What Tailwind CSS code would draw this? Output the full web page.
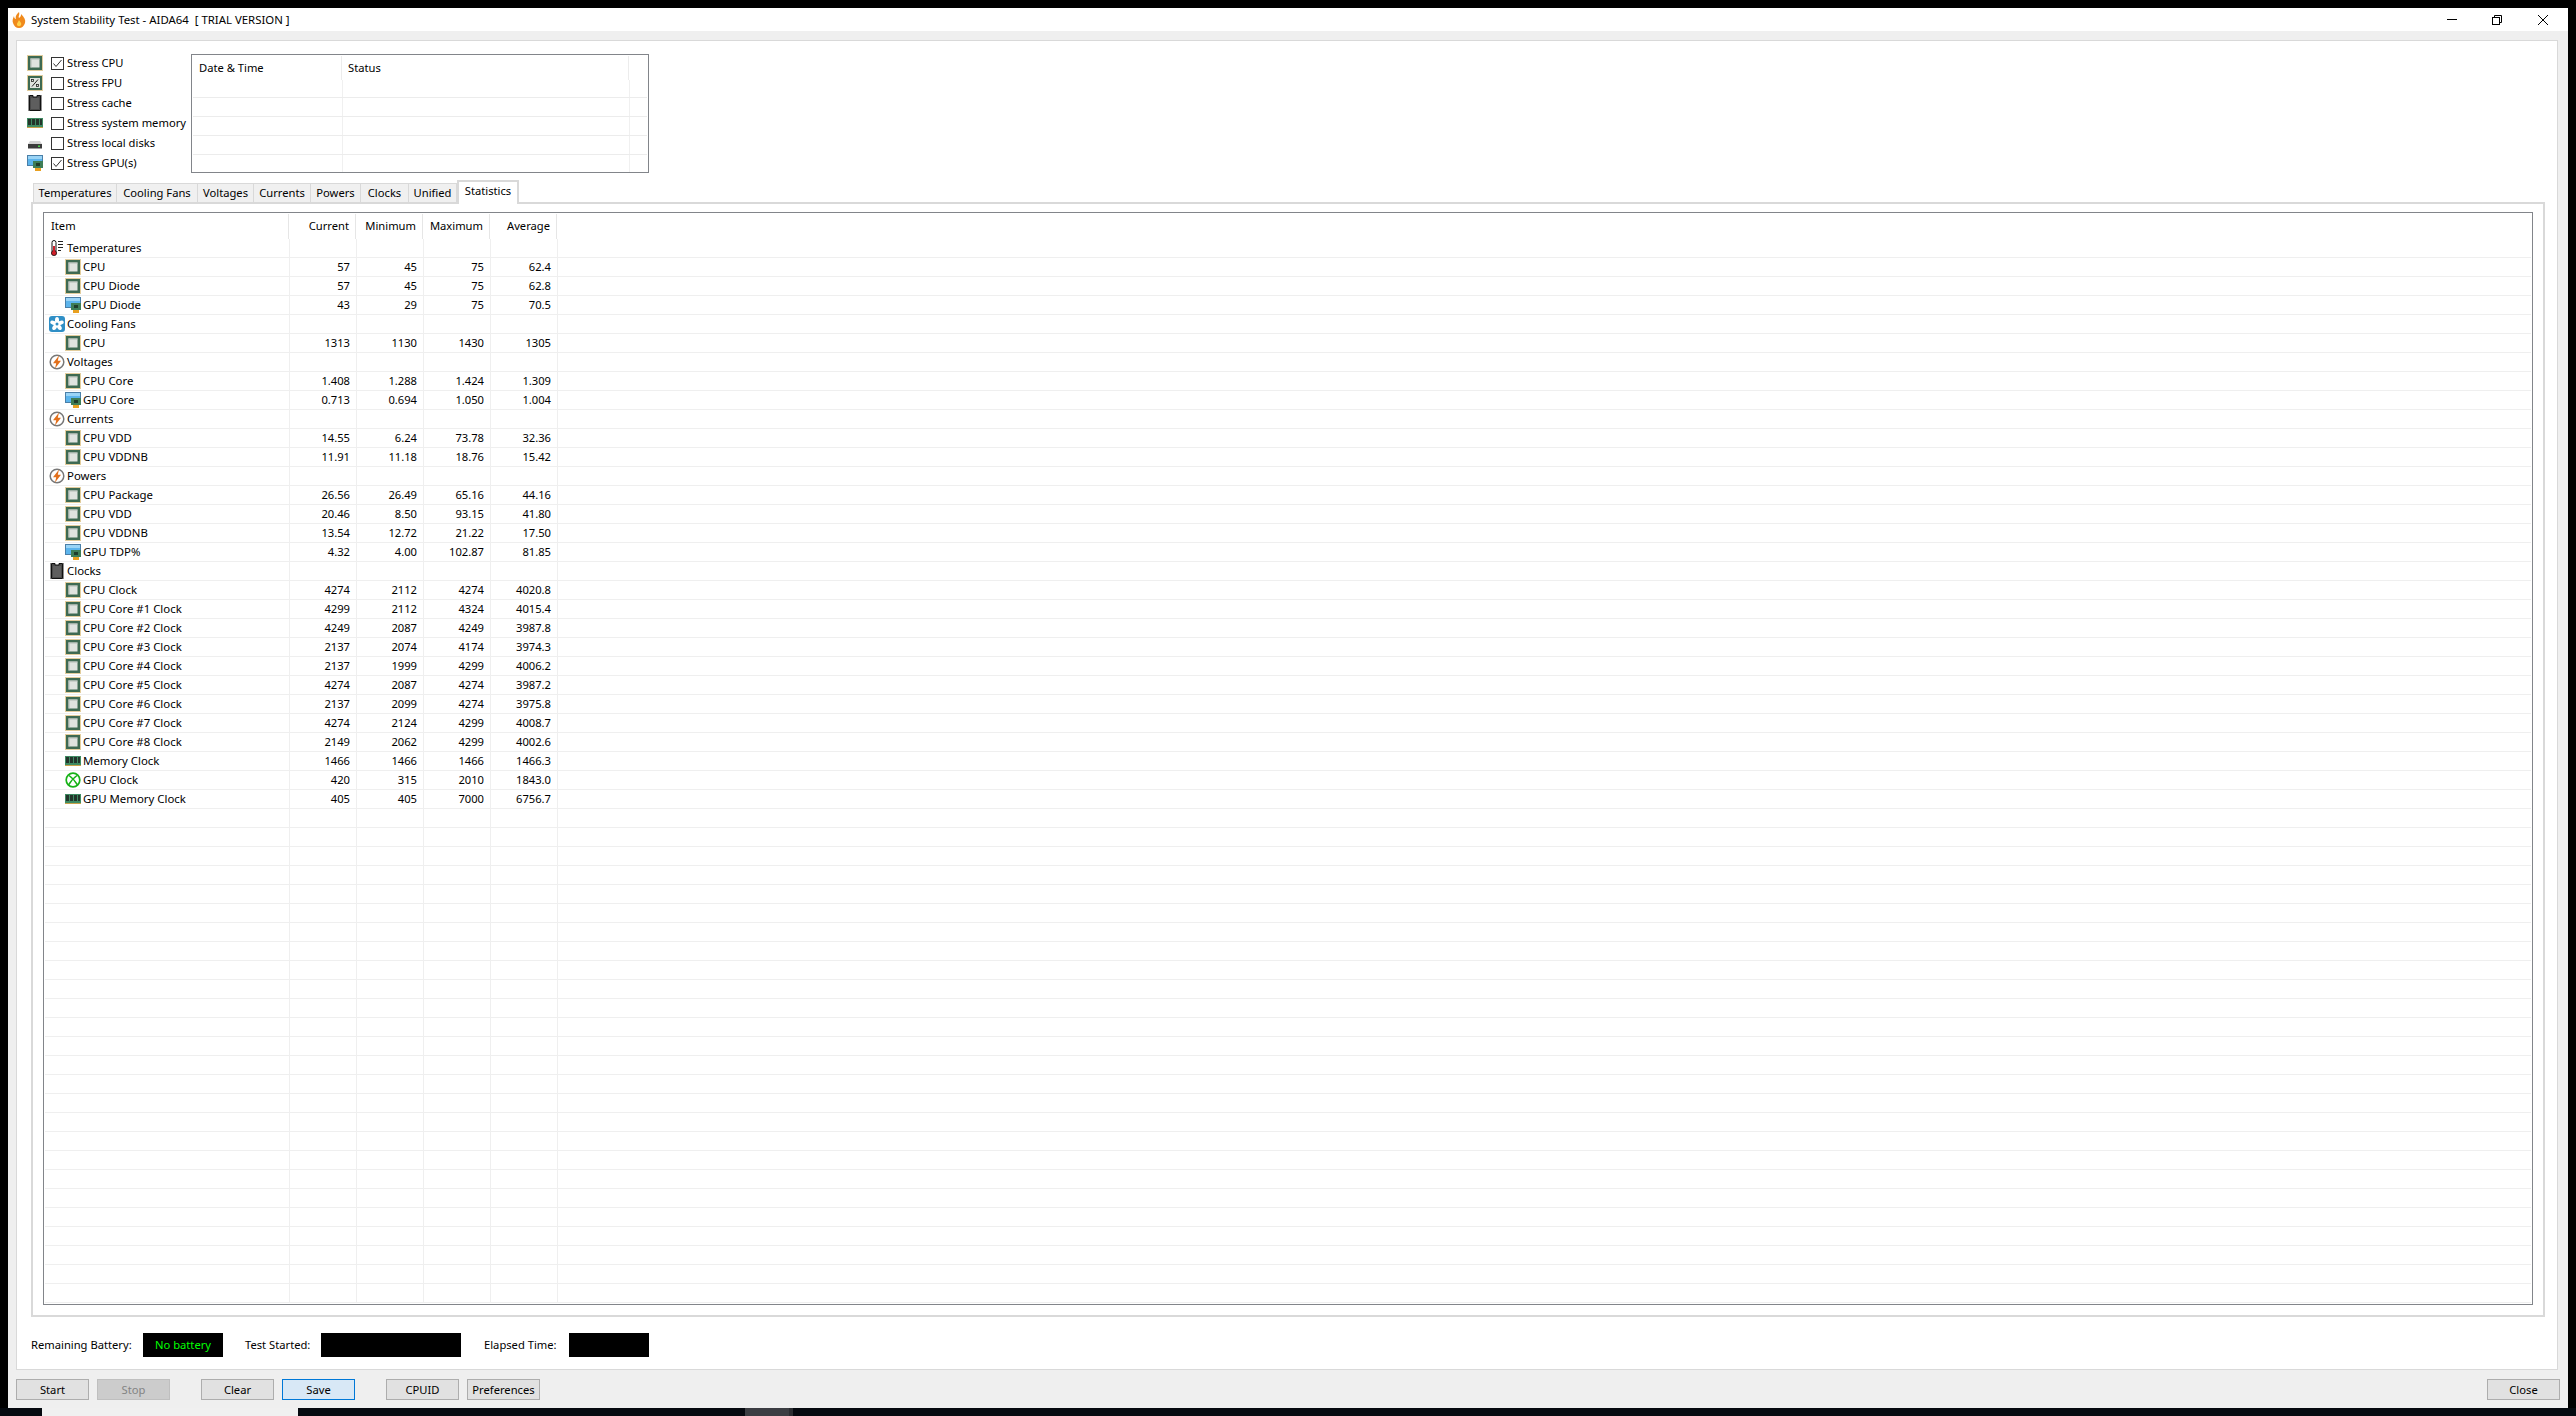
<!DOCTYPE html>
<html lang="en">
<head>
<meta charset="UTF-8">
<title>System Stability Test - AIDA64</title>
<script src="https://cdn.jsdelivr.net/npm/@tailwindcss/browser@4"></script>
</head>
<body class="bg-black w-[2576px] h-[1416px] overflow-hidden font-['Noto_Sans',sans-serif] text-[11.2px] leading-[16px] text-black">

<!-- shared icons -->
<svg class="hidden">
  <symbol id="cpu" viewBox="0 0 16 16">
    <rect x="0.5" y="0.5" width="15" height="15" fill="none" stroke="#c49a3a" stroke-dasharray="1 1"/>
    <rect x="1" y="1" width="14" height="14" fill="#3e6a52"/>
    <rect x="3.500" y="3.500" width="9" height="9" fill="#dfe3df"/>
    <rect x="3.500" y="3.500" width="9" height="1" fill="#b4bcb6"/>
    <rect x="3.500" y="3.500" width="1" height="9" fill="#b4bcb6"/>
  </symbol>
  <symbol id="fpu" viewBox="0 0 16 16">
    <rect x="0.5" y="0.5" width="15" height="15" fill="none" stroke="#c49a3a" stroke-dasharray="1 1"/>
    <rect x="1" y="1" width="14" height="14" fill="#3e6a52"/>
    <rect x="3" y="3" width="10" height="10" fill="#dfe3df"/>
    <path d="M5 11.500 11 4.500" stroke="#222" fill="none"/>
    <rect x="4.500" y="4.500" width="2" height="2" fill="none" stroke="#222" stroke-width="0.8"/>
    <rect x="9.500" y="9.500" width="2" height="2" fill="none" stroke="#222" stroke-width="0.8"/>
  </symbol>
  <symbol id="chip" viewBox="0 0 16 16">
    <path d="M1 1h1M1 3h1M1 5h1M1 7h1M1 9h1M1 11h1M1 13h1M1 15h1M14 1h1M14 3h1M14 5h1M14 7h1M14 9h1M14 11h1M14 13h1M14 15h1" stroke="#222"/>
    <path d="M2.500 0.500h3.500v1.500h4v-1.500h3.500v15h-11z" fill="#4a4a4a" stroke="#111"/>
    <rect x="4" y="3" width="8" height="11" fill="#5e5e5e"/>
  </symbol>
  <symbol id="mem" viewBox="0 0 16 16">
    <rect x="0" y="3" width="16" height="9" fill="#3f8a62"/>
    <rect x="0" y="12" width="16" height="1" fill="#c9a24a"/>
    <rect x="1" y="4" width="3" height="6" fill="#23352b"/>
    <rect x="5" y="4" width="3" height="6" fill="#23352b"/>
    <rect x="9" y="4" width="3" height="6" fill="#23352b"/>
    <rect x="13" y="4" width="2" height="6" fill="#23352b"/>
  </symbol>
  <symbol id="disk" viewBox="0 0 16 16">
    <path d="M3 6h10l2 3v4H1V9z" fill="#d4d4d4"/>
    <rect x="1" y="9" width="14" height="4.500" fill="#3c3c3c"/>
    <rect x="11" y="10.500" width="2" height="1.500" fill="#4fd34f"/>
  </symbol>
  <symbol id="gpu" viewBox="0 0 16 16">
    <rect x="0.500" y="0.500" width="15" height="10" fill="#5cb4ec" stroke="#4a7fa8"/>
    <rect x="1" y="1" width="14" height="3" fill="#9ad4f6"/>
    <rect x="6" y="6" width="10" height="7" fill="#3e7d56"/>
    <rect x="9" y="8" width="4" height="3" fill="#1f3d2b"/>
    <rect x="8" y="13" width="6" height="3" fill="#e8a020"/>
  </symbol>
  <symbol id="therm" viewBox="0 0 16 16">
    <rect x="3" y="0.500" width="4" height="12" rx="2" fill="#fff" stroke="#111"/>
    <circle cx="5" cy="13" r="2.600" fill="#d01f2a" stroke="#111" stroke-width="0.8"/>
    <rect x="4" y="6" width="2" height="6" fill="#d01f2a"/>
    <path d="M9 1.500h5M9 4.500h5M9 7.500h5M9 10.500h3" stroke="#222"/>
  </symbol>
  <symbol id="fan" viewBox="0 0 16 16">
    <rect width="16" height="16" rx="3" fill="#2f8fc6"/>
    <g fill="#fff">
      <ellipse cx="8" cy="4.300" rx="2" ry="3.300"/>
      <ellipse cx="8" cy="4.300" rx="2" ry="3.300" transform="rotate(72 8 8)"/>
      <ellipse cx="8" cy="4.300" rx="2" ry="3.300" transform="rotate(144 8 8)"/>
      <ellipse cx="8" cy="4.300" rx="2" ry="3.300" transform="rotate(216 8 8)"/>
      <ellipse cx="8" cy="4.300" rx="2" ry="3.300" transform="rotate(288 8 8)"/>
    </g>
    <circle cx="8" cy="8" r="1.500" fill="#2f8fc6"/>
  </symbol>
  <symbol id="bolt" viewBox="0 0 16 16">
    <circle cx="8" cy="8" r="6.800" fill="#fff" stroke="#777" stroke-width="1.500"/>
    <path d="M10 1.500 4 9.200h3.200L6 14.500 12 6.800H8.800z" fill="#e2701c"/>
  </symbol>
  <symbol id="xbox" viewBox="0 0 16 16">
    <circle cx="8" cy="8" r="6.800" fill="#fff" stroke="#17b217" stroke-width="1.700"/>
    <path d="M4 3.500C7 5.500 10 9 12.500 13M12 3.500C9 5.500 6 9 3.500 13" stroke="#17b217" stroke-width="1.500" fill="none"/>
  </symbol>
</svg>

<div class="h-2"></div>

<div class="ml-2 w-[2560px] h-[1400px] bg-[#efefef] flex flex-col">

  <!-- Title bar -->
  <div class="h-[23px] bg-white flex items-center">
    <svg class="ml-1 w-3.5 h-4" viewBox="0 0 14 16">
      <path d="M7 0C8 3 6 4 7 6 9 5 9 3 9 2c3 3 5 6 4 9-1 3-3 5-6 5s-5-2-6-5C0 9 1 6 2 4c0 2 1 3 2 3C3 4 5 2 7 0Z" fill="#f08a1c"/>
      <path d="M7 8c1 2 3 3 2 5-.5 1.500-3.500 1.500-4 0-.5-2 1.500-3 2-5Z" fill="#ffd24a"/>
    </svg>
    <span class="ml-[5px] text-[11.4px]">System Stability Test - AIDA64&nbsp; [ TRIAL VERSION ]</span>
    <div class="ml-auto flex items-center h-full relative">
      <div class="w-[10px] h-px bg-black mr-[35px]"></div>
      <svg class="w-[10px] h-[10px] mr-9" viewBox="0 0 10 10" fill="none" stroke="#000"><path d="M2.500 2.500V.5h7v7h-2"/><rect x=".5" y="2.500" width="7" height="7"/></svg>
      <svg class="w-[10px] h-[10px] mr-5" viewBox="0 0 10 10" fill="none" stroke="#000"><path d="M0 0 10 10M10 0 0 10"/></svg>
    </div>
  </div>

  <!-- Main panel -->
  <div class="mt-[9px] ml-2 w-[2542px] h-[1330px] bg-white border border-[#d9d9d9] shrink-0">

    <div class="flex pl-[10px] pt-3">
      <div class="w-[164px]">
        <label class="h-5 flex items-center"><svg class="w-4 h-4 shrink-0"><use href="#cpu"/></svg><span class="ml-2 w-[13px] h-[13px] shrink-0 border border-[#333] flex items-center justify-center"><svg class="w-[11px] h-[11px]" viewBox="0 0 11 11" fill="none" stroke="#333"><path d="M1.500 5.500 4 8.500 9.500 2"/></svg></span><span class="ml-[3px] whitespace-nowrap">Stress CPU</span></label>
        <label class="h-5 flex items-center"><svg class="w-4 h-4 shrink-0"><use href="#fpu"/></svg><span class="ml-2 w-[13px] h-[13px] shrink-0 border border-[#333]"></span><span class="ml-[3px] whitespace-nowrap">Stress FPU</span></label>
        <label class="h-5 flex items-center"><svg class="w-4 h-4 shrink-0"><use href="#chip"/></svg><span class="ml-2 w-[13px] h-[13px] shrink-0 border border-[#333]"></span><span class="ml-[3px] whitespace-nowrap">Stress cache</span></label>
        <label class="h-5 flex items-center"><svg class="w-4 h-4 shrink-0"><use href="#mem"/></svg><span class="ml-2 w-[13px] h-[13px] shrink-0 border border-[#333]"></span><span class="ml-[3px] whitespace-nowrap">Stress system memory</span></label>
        <label class="h-5 flex items-center"><svg class="w-4 h-4 shrink-0"><use href="#disk"/></svg><span class="ml-2 w-[13px] h-[13px] shrink-0 border border-[#333]"></span><span class="ml-[3px] whitespace-nowrap">Stress local disks</span></label>
        <label class="h-5 flex items-center"><svg class="w-4 h-4 shrink-0"><use href="#gpu"/></svg><span class="ml-2 w-[13px] h-[13px] shrink-0 border border-[#333] flex items-center justify-center"><svg class="w-[11px] h-[11px]" viewBox="0 0 11 11" fill="none" stroke="#333"><path d="M1.500 5.500 4 8.500 9.500 2"/></svg></span><span class="ml-[3px] whitespace-nowrap">Stress GPU(s)</span></label>
      </div>

      <!-- Log table -->
      <div class="mt-px w-[458px] h-[119px] border border-[#82858a] p-px overflow-hidden">
        <div class="h-[24px] flex items-center">
          <div class="w-[149px] h-full pl-[6px] flex items-center border-r border-[#ececec]">Date &amp; Time</div>
          <div class="w-[287px] h-full pl-[6px] flex items-center border-r border-[#ececec]">Status</div>
        </div>
        <div class="h-[18px] flex border-b border-[#ececec]"><div class="w-[150px] border-r border-[#f0f0f0]"></div><div class="w-[287px] border-r border-[#f0f0f0]"></div></div>
        <div class="h-[19px] flex border-b border-[#ececec]"><div class="w-[150px] border-r border-[#f0f0f0]"></div><div class="w-[287px] border-r border-[#f0f0f0]"></div></div>
        <div class="h-[19px] flex border-b border-[#ececec]"><div class="w-[150px] border-r border-[#f0f0f0]"></div><div class="w-[287px] border-r border-[#f0f0f0]"></div></div>
        <div class="h-[19px] flex border-b border-[#ececec]"><div class="w-[150px] border-r border-[#f0f0f0]"></div><div class="w-[287px] border-r border-[#f0f0f0]"></div></div>
        <div class="h-[19px] flex"><div class="w-[150px] border-r border-[#f0f0f0]"></div><div class="w-[287px] border-r border-[#f0f0f0]"></div></div>
      </div>
    </div>

    <!-- Tabs -->
    <div class="mt-[7px] ml-4 h-[22px] flex items-end">
      <div class="w-[84px] h-[19px] flex items-center justify-center bg-[#f0f0f0] border border-b-0 border-[#d9d9d9]">Temperatures</div>
      <div class="w-[81px] h-[19px] flex items-center justify-center bg-[#f0f0f0] border border-b-0 border-l-0 border-[#d9d9d9]">Cooling Fans</div>
      <div class="w-[56px] h-[19px] flex items-center justify-center bg-[#f0f0f0] border border-b-0 border-l-0 border-[#d9d9d9]">Voltages</div>
      <div class="w-[57px] h-[19px] flex items-center justify-center bg-[#f0f0f0] border border-b-0 border-l-0 border-[#d9d9d9]">Currents</div>
      <div class="w-[50px] h-[19px] flex items-center justify-center bg-[#f0f0f0] border border-b-0 border-l-0 border-[#d9d9d9]">Powers</div>
      <div class="w-[48px] h-[19px] flex items-center justify-center bg-[#f0f0f0] border border-b-0 border-l-0 border-[#d9d9d9]">Clocks</div>
      <div class="w-[48px] h-[19px] flex items-center justify-center bg-[#f0f0f0] border border-b-0 border-l-0 border-[#d9d9d9]">Unified</div>
      <div class="w-[62px] h-[24px] -mb-[2px] relative z-10 pb-1 flex items-center justify-center bg-white border-2 border-b-0 border-[#d9d9d9]">Statistics</div>
    </div>

    <!-- Tab page -->
    <div class="ml-[14px] w-[2514px] h-[1115px] border-2 border-[#d9d9d9] pl-[10px] pt-2">
      <div class="w-[2490px] h-[1093px] border border-[#82858a] p-px overflow-hidden">
        <div class="h-[25px] flex">
          <div class="w-[244px] pl-[6px] pb-[2px] flex items-center border-r border-[#e6e6e6]">Item</div>
          <div class="w-[67px] pr-[6px] pb-[2px] flex items-center justify-end border-r border-[#e6e6e6]">Current</div>
          <div class="w-[67px] pr-[6px] pb-[2px] flex items-center justify-end border-r border-[#e6e6e6]">Minimum</div>
          <div class="w-[67px] pr-[6px] pb-[2px] flex items-center justify-end border-r border-[#e6e6e6]">Maximum</div>
          <div class="w-[67px] pr-[6px] pb-[2px] flex items-center justify-end border-r border-[#e6e6e6]">Average</div>
        </div>
        <div id="rows"></div>
      </div>
    </div>

    <!-- Status -->
    <div class="mt-4 pl-[14px] flex items-center h-6">
      <span class="w-[112px] whitespace-nowrap">Remaining Battery:</span>
      <span class="w-20 h-6 bg-black text-[#00ff00] flex items-center justify-center">No battery</span>
      <span class="ml-[22px] w-[76px] whitespace-nowrap">Test Started:</span>
      <span class="w-[140px] h-6 bg-black"></span>
      <span class="ml-[23px] w-[85px] whitespace-nowrap">Elapsed Time:</span>
      <span class="w-20 h-6 bg-black"></span>
    </div>
  </div>

  <!-- Buttons -->
  <div class="mt-[9px] pl-2 flex h-[21px]">
    <button class="w-[73px] bg-[#e1e1e1] border border-[#adadad]">Start</button>
    <button class="ml-2 w-[73px] bg-[#cccccc] border border-[#bfbfbf] text-[#838383]">Stop</button>
    <button class="ml-[31px] w-[73px] bg-[#e1e1e1] border border-[#adadad]">Clear</button>
    <button class="ml-2 w-[73px] bg-[#d8e8f6] border border-[#0078d7]">Save</button>
    <button class="ml-[31px] w-[73px] bg-[#e1e1e1] border border-[#adadad]">CPUID</button>
    <button class="ml-2 w-[73px] bg-[#e1e1e1] border border-[#adadad]">Preferences</button>
    <button class="ml-auto mr-2 w-[73px] bg-[#e1e1e1] border border-[#adadad]">Close</button>
  </div>
</div>

<!-- Taskbar sliver -->
<div class="h-2 bg-[#05090f] flex overflow-hidden relative">
  <div class="ml-[42px] w-[256px] bg-[#f0f0f0]"></div>
  <div class="ml-[447px] w-[44px] bg-[#3b3d42]"></div>
  <div class="w-[4px] bg-[#2b2d31]"></div>
  <span class="absolute left-[2468px] top-[4px] text-white">17:00</span>
</div>

<script>
  // [depth, icon, label, current, minimum, maximum, average]
  const data = [
    [0, 'therm', 'Temperatures'],
    [1, 'cpu', 'CPU', '57', '45', '75', '62.4'],
    [1, 'cpu', 'CPU Diode', '57', '45', '75', '62.8'],
    [1, 'gpu', 'GPU Diode', '43', '29', '75', '70.5'],
    [0, 'fan', 'Cooling Fans'],
    [1, 'cpu', 'CPU', '1313', '1130', '1430', '1305'],
    [0, 'bolt', 'Voltages'],
    [1, 'cpu', 'CPU Core', '1.408', '1.288', '1.424', '1.309'],
    [1, 'gpu', 'GPU Core', '0.713', '0.694', '1.050', '1.004'],
    [0, 'bolt', 'Currents'],
    [1, 'cpu', 'CPU VDD', '14.55', '6.24', '73.78', '32.36'],
    [1, 'cpu', 'CPU VDDNB', '11.91', '11.18', '18.76', '15.42'],
    [0, 'bolt', 'Powers'],
    [1, 'cpu', 'CPU Package', '26.56', '26.49', '65.16', '44.16'],
    [1, 'cpu', 'CPU VDD', '20.46', '8.50', '93.15', '41.80'],
    [1, 'cpu', 'CPU VDDNB', '13.54', '12.72', '21.22', '17.50'],
    [1, 'gpu', 'GPU TDP%', '4.32', '4.00', '102.87', '81.85'],
    [0, 'chip', 'Clocks'],
    [1, 'cpu', 'CPU Clock', '4274', '2112', '4274', '4020.8'],
    [1, 'cpu', 'CPU Core #1 Clock', '4299', '2112', '4324', '4015.4'],
    [1, 'cpu', 'CPU Core #2 Clock', '4249', '2087', '4249', '3987.8'],
    [1, 'cpu', 'CPU Core #3 Clock', '2137', '2074', '4174', '3974.3'],
    [1, 'cpu', 'CPU Core #4 Clock', '2137', '1999', '4299', '4006.2'],
    [1, 'cpu', 'CPU Core #5 Clock', '4274', '2087', '4274', '3987.2'],
    [1, 'cpu', 'CPU Core #6 Clock', '2137', '2099', '4274', '3975.8'],
    [1, 'cpu', 'CPU Core #7 Clock', '4274', '2124', '4299', '4008.7'],
    [1, 'cpu', 'CPU Core #8 Clock', '2149', '2062', '4299', '4002.6'],
    [1, 'mem', 'Memory Clock', '1466', '1466', '1466', '1466.3'],
    [1, 'xbox', 'GPU Clock', '420', '315', '2010', '1843.0'],
    [1, 'mem', 'GPU Memory Clock', '405', '405', '7000', '6756.7'],
  ];

  const num = v => `<div class="w-[67px] pr-[6px] flex items-center justify-end border-r border-[#efefef]">${v || ''}</div>`;
  let html = '';
  for (let i = 0; i < 56; i++) {
    const r = data[i];
    let first = '';
    if (r) {
      const pad = r[0] ? 'pl-5' : 'pl-1';
      first = `<div class="${pad} h-full flex items-center"><svg class="w-4 h-4 shrink-0"><use href="#${r[1]}"/></svg><span class="ml-[2px] whitespace-nowrap text-[11.4px]">${r[2]}</span></div>`;
    }
    html += `<div class="h-[19px] flex border-b border-[#efefef]"><div class="w-[245px] border-r border-[#efefef]">${first}</div>`
      + num(r && r[3]) + num(r && r[4]) + num(r && r[5]) + num(r && r[6]) + `</div>`;
  }
  document.getElementById('rows').innerHTML = html;
</script>
</body>
</html>
